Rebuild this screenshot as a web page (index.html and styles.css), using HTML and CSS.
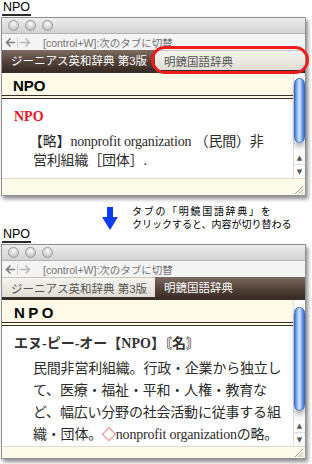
FILE: index.html
```html
<!DOCTYPE html>
<html lang="ja">
<head>
<meta charset="utf-8">
<link rel="stylesheet" href="styles.css">
</head>
<body>
<div class="label">NPO</div>
<div class="window">
  <div class="titlebar"><span class="dot"></span><span class="dot"></span><span class="dot"></span></div>
  <div class="toolbar">
    <svg class="nav" viewBox="0 0 28 11"><path d="M10 5.5H1.5M5.5 1.5L1.5 5.5L5.5 9.5" fill="none" stroke="#7d7d7d" stroke-width="1.6"/><path d="M12.5 0V11" stroke="#d0d0d0"/><path d="M15 5.5H24.5M20.5 1.5L24.5 5.5L20.5 9.5" fill="none" stroke="#b9b9b9" stroke-width="1.6"/></svg>
    <span class="hint">[control+W]:次のタブに切替</span>
  </div>
  <div class="tabs"><div class="tab first on">ジーニアス英和辞典 第3版</div><div class="tab second off">明鏡国語辞典</div></div>
  <div class="pane">
    <div class="main">
      <div class="head">NPO</div>
      <div class="content c1">
        <div class="hw red">NPO</div>
        <p class="para">【略】nonprofit organization （民間）非<br>営利組織［団体］.</p>
      </div>
    </div>
    <div class="scroll s1"><div class="thumb"></div><div class="arrows"><span>▲</span><span>▼</span></div></div>
  </div>
  <div class="foot f1"><svg class="grip" viewBox="0 0 11 11"><path d="M10 2L2 10M10 5.5L5.5 10M10 8.5L8.5 10" stroke="#9a9a9a" stroke-width="1"/></svg></div>
  <div class="callout"></div>
</div>
<div class="note">
  <svg class="arrow" viewBox="0 0 16 23"><path d="M5 0H11V10H16L8 23L0 10H5Z" fill="#0a3cf5"/></svg>
  <div class="note-text"><div class="nl1">タブの「明鏡国語辞典」を</div><div>クリックすると、内容が切り替わる</div></div>
</div>
<div class="label">NPO</div>
<div class="window">
  <div class="titlebar"><span class="dot"></span><span class="dot"></span><span class="dot"></span></div>
  <div class="toolbar">
    <svg class="nav" viewBox="0 0 28 11"><path d="M10 5.5H1.5M5.5 1.5L1.5 5.5L5.5 9.5" fill="none" stroke="#7d7d7d" stroke-width="1.6"/><path d="M12.5 0V11" stroke="#d0d0d0"/><path d="M15 5.5H24.5M20.5 1.5L24.5 5.5L20.5 9.5" fill="none" stroke="#b9b9b9" stroke-width="1.6"/></svg>
    <span class="hint">[control+W]:次のタブに切替</span>
  </div>
  <div class="tabs"><div class="tab first off">ジーニアス英和辞典 第3版</div><div class="tab second on">明鏡国語辞典</div></div>
  <div class="pane">
    <div class="main">
      <div class="head spaced">NPO</div>
      <div class="content c2">
        <div class="hw">エヌ-ピー-オー【NPO】〘名〙</div>
        <p class="para">民間非営利組織。行政・企業から独立し<br>て、医療・福祉・平和・人権・教育な<br>ど、幅広い分野の社会活動に従事する組<br>織・団体。<span class="red">◇</span>nonprofit organizationの略。</p>
      </div>
    </div>
    <div class="scroll s2"><div class="thumb"></div><div class="arrows"><span>▲</span><span>▼</span></div></div>
  </div>
  <div class="foot f2"><svg class="grip" viewBox="0 0 11 11"><path d="M10 2L2 10M10 5.5L5.5 10M10 8.5L8.5 10" stroke="#9a9a9a" stroke-width="1"/></svg></div>
</div>
</body>
</html>
```
FILE: styles.css
```css
* { box-sizing: border-box; }
body {
  margin: 0;
  width: 312px;
  height: 464px;
  overflow: hidden;
  background: #fff;
  color: #000;
  font-family: "Liberation Sans", "Noto Sans CJK JP", sans-serif;
}
.label {
  width: max-content;
  height: 16px;
  margin-left: 2px;
  padding: 1px 1px 0;
  font-size: 12.5px;
  line-height: 13px;
  border-bottom: 2px solid #2a2a2a;
}
.window {
  position: relative;
  width: 305px;
  margin: 1px 0 0 1px;
  border: 1px solid #8f8f8f;
  background: #fff;
  box-shadow: 2px 3px 4px rgba(0, 0, 0, 0.45);
}
.titlebar {
  height: 15px;
  display: flex;
  align-items: center;
  gap: 6px;
  padding-left: 6px;
  background: linear-gradient(#ededed, #d2d2d2);
}
.dot {
  width: 11px;
  height: 11px;
  border-radius: 50%;
  border: 1px solid #9a9a9a;
  background: radial-gradient(circle at 50% 30%, #fafafa, #d0d0d0 60%, #b5b5b5);
}
.toolbar {
  height: 17px;
  display: flex;
  align-items: center;
  padding-left: 3px;
  border-top: 1px solid #b3b3b3;
  background: #f4f4f4;
}
.nav { width: 28px; height: 11px; flex: none; }
.hint {
  margin-left: 10px;
  font-size: 10.5px;
  color: #737373;
  white-space: nowrap;
}
.tabs {
  display: flex;
  height: 23px;
  border-bottom: 3px solid #3a2c26;
}
.tab {
  display: flex;
  align-items: center;
  padding-left: 9px;
  font-size: 11.5px;
  white-space: nowrap;
}
.first { width: 153px; flex: none; }
.second { flex: 1; }
.on {
  background: linear-gradient(#7c6b61, #55453c 55%, #3c2e28);
  color: #fff;
}
.off {
  background: linear-gradient(#f5f4ef, #e1ddd4);
  color: #555;
  border-top: 1px solid #c9c5bc;
}
.pane { display: flex; }
.main { flex: 1; min-width: 0; }
.head {
  height: 26px;
  display: flex;
  align-items: center;
  padding: 3px 0 0 11px;
  background: #fdfbe7;
  border-bottom: 4px double #3a2c26;
  font-size: 15px;
  font-weight: bold;
}
.head.spaced { padding-left: 12px; letter-spacing: 3.5px; }
.content {
  padding-left: 12px;
  font-family: "Liberation Serif", "Noto Sans CJK JP", serif;
  color: #2b2b2b;
  white-space: nowrap;
}
.c1 { height: 79px; padding-top: 8px; }
.c2 { height: 120px; padding-top: 7px; }
.hw {
  font-size: 14px;
  line-height: 20px;
  font-weight: bold;
  color: #333;
}
.c2 .hw { line-height: 22px; }
.red { color: #e8141b; }
.para {
  margin: 5px 0 0 19px;
  font-size: 14px;
  letter-spacing: -0.2px;
  line-height: 19px;
}
.c1 .para { text-indent: -4px; }
.c2 .para { margin-top: 3px; line-height: 22px; }
.scroll {
  width: 12px;
  flex: none;
  display: flex;
  flex-direction: column;
  border-left: 1px solid #dedede;
  background: #fbfbfb;
}
.s1 { padding-top: 5px; }
.s2 { padding-top: 7px; }
.thumb {
  flex: 1;
  margin: 0 0 8px 0;
  border: 1px solid #3b67c4;
  border-radius: 6px;
  background: linear-gradient(90deg, #4b7fd8, #a9cdfa 35%, #d3e6fd 50%, #7eaaf0 75%, #3c6ccf);
  box-shadow: 0 4px 4px rgba(0, 0, 0, 0.25);
}
.arrows {
  height: 27px;
  display: flex;
  flex-direction: column;
}
.arrows span {
  flex: 1;
  display: flex;
  align-items: center;
  justify-content: center;
  font-size: 7px;
  color: #555;
  font-family: "DejaVu Sans", sans-serif;
}
.arrows span + span { border-top: 1px solid #dcdcdc; }
.foot {
  display: flex;
  justify-content: flex-end;
  align-items: flex-end;
  background: #fcfae8;
  border-top: 1px solid #e4d7cd;
}
.f1 { height: 17px; }
.f2 { height: 12px; }
.grip { width: 11px; height: 11px; margin: 0 1px 0 0; }
.callout {
  position: absolute;
  left: 149px;
  top: 28px;
  width: 158px;
  height: 28px;
  border: 3px solid #ee1c1c;
  border-radius: 14px;
}
.note {
  display: flex;
  height: 31px;
  padding: 8px 0 0 102px;
}
.arrow { width: 16px; height: 23px; margin-top: 3px; flex: none; }
.note-text {
  margin-left: 14px;
  font-family: "Noto Sans CJK JP", sans-serif;
  font-size: 10px;
  line-height: 13px;
  white-space: nowrap;
}
.nl1 { letter-spacing: 1.7px; }
```
